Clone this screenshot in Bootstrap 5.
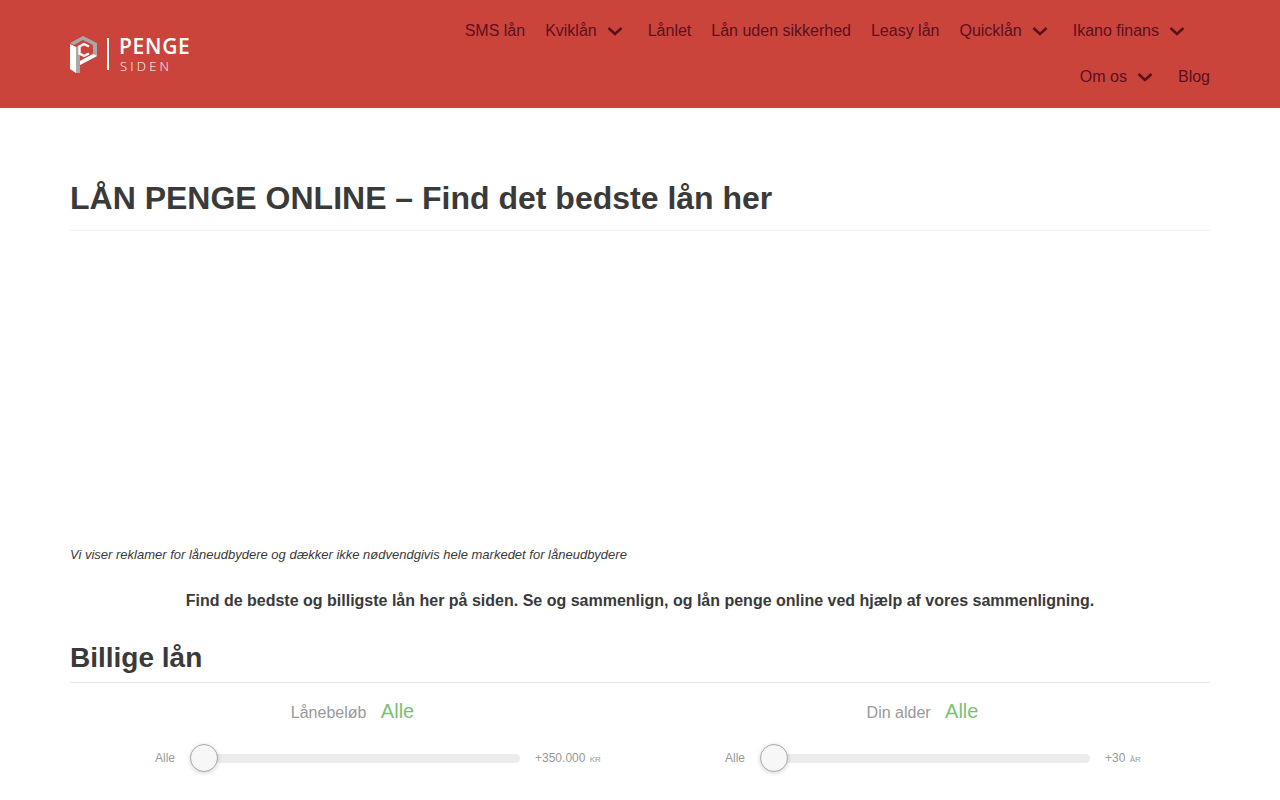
<!DOCTYPE html>
<html lang="da">
<head>
    <meta charset="UTF-8">
    <meta name="viewport" content="width=device-width, initial-scale=1.0">
    <title>Lån penge online</title>
    <link rel="stylesheet" href="https://cdn.jsdelivr.net/npm/bootstrap@5.3.0/dist/css/bootstrap.min.css">
    <style>
        body {
            font-family: "Liberation Sans", Arial, sans-serif;
            font-size: 16px;
            color: #3a3a3a;
            overflow: hidden;
        }
        .site-wrap { padding-left: 70px; padding-right: 70px; }
        .site-header { background: #cb443c; height: 108px; }
        .logo-word { font-family: "Open Sans", sans-serif; color: #fff; line-height: 1; }
        .logo-line { width: 2px; height: 32px; background: #fff; margin: 0 10px 0 10px; }
        .logo-big { font-size: 21px; font-weight: 600; letter-spacing: .7px; }
        .logo-small { font-size: 13px; font-weight: 300; letter-spacing: 3.2px; margin-top: 3px; padding-left: 1px; }
        .menu-row { height: 46px; gap: 20px; }
        .menu-row a { color: #5c0f1d; text-decoration: none; }
        .menu-caret { margin-left: 10px; margin-right: 5px; vertical-align: 0; }
        .menu-top { padding-top: 8px; }
        .menu-pad { padding-right: 20px; }
        .page-title { font-size: 32px; font-weight: 700; margin: 0; padding-top: 72px; padding-bottom: 13px; border-bottom: 1px solid #eee; line-height: 37px; }
        .ad-space { height: 316px; }
        .ad-note { font-size: 13px; font-style: italic; line-height: 15px; margin: 0; }
        .lead-line { font-weight: 700; text-align: center; margin: 0; padding-top: 27px; line-height: 24px; }
        .sub-title { font-size: 28px; font-weight: 700; margin: 0; padding-top: 29px; padding-bottom: 8px; border-bottom: 1px solid #e6e6e6; line-height: 32px; }
        .filter-head { color: #999; height: 56px; padding-top: 14px; line-height: 28px; padding-right: 5px; }
        .filter-value { color: #7dbf73; font-size: 20px; margin-left: 10px; }
        .filter-row { padding-left: 85px; font-size: 12px; color: #999; gap: 15px; height: 38px; }
        .slider-track { width: 330px; height: 9px; background: #ececec; border-radius: 5px; }
        .slider-knob { width: 28px; height: 28px; top: -10px; background: #f7f7f7; border: 1px solid #aaa; border-radius: 50%; box-shadow: 0 1px 4px rgba(0,0,0,.18); }
        .unit-text { font-size: 8px; margin-left: 1px; text-transform: uppercase; }
    </style>
</head>
<body>

    <!-- Header -->
    <header class="site-header site-wrap d-flex justify-content-between">
        <a href="#" class="d-flex align-items-center text-decoration-none">
            <svg width="27" height="37" viewBox="0 0 27 37" class="flex-shrink-0">
                <polygon points="0,7 13,0 27,7 27,20 10,29 10,25 23,18 23,9 13,4 4,9" fill="#a8a8a8"/>
                <polygon points="6,11 10,9 10,37 6,37" fill="#a8a8a8"/>
                <polygon points="0,8 6,11 6,37 0,33" fill="#fff"/>
                <path d="M19 10.500 14 8 9.500 10.500V17.500L14 20 19 17.500" fill="none" stroke="#fff" stroke-width="2.400"/>
                <polygon points="10,25 23,18 27,20 10,29" fill="#fff"/>
            </svg>
            <span class="logo-line"></span>
            <span class="logo-word d-flex flex-column">
                <span class="logo-big">PENGE</span>
                <span class="logo-small">SIDEN</span>
            </span>
        </a>
        <nav class="menu-top">
            <div class="menu-row d-flex justify-content-end align-items-center menu-pad">
                <a href="#">SMS lån</a>
                <a href="#">Kviklån<svg class="menu-caret" width="16" height="10" viewBox="0 0 16 10"><path d="M1.500 2 8 8l6.500-6" fill="none" stroke="#5c0f1d" stroke-width="2.600"/></svg></a>
                <a href="#">Lånlet</a>
                <a href="#">Lån uden sikkerhed</a>
                <a href="#">Leasy lån</a>
                <a href="#">Quicklån<svg class="menu-caret" width="16" height="10" viewBox="0 0 16 10"><path d="M1.500 2 8 8l6.500-6" fill="none" stroke="#5c0f1d" stroke-width="2.600"/></svg></a>
                <a href="#">Ikano finans<svg class="menu-caret" width="16" height="10" viewBox="0 0 16 10"><path d="M1.500 2 8 8l6.500-6" fill="none" stroke="#5c0f1d" stroke-width="2.600"/></svg></a>
            </div>
            <div class="menu-row d-flex justify-content-end align-items-center">
                <a href="#">Om os<svg class="menu-caret" width="16" height="10" viewBox="0 0 16 10"><path d="M1.500 2 8 8l6.500-6" fill="none" stroke="#5c0f1d" stroke-width="2.600"/></svg></a>
                <a href="#">Blog</a>
            </div>
        </nav>
    </header>

    <main class="site-wrap">
        <h1 class="page-title">LÅN PENGE ONLINE – Find det bedste lån her</h1>
        <div class="ad-space"></div>
        <p class="ad-note">Vi viser reklamer for låneudbydere og dækker ikke nødvendgivis hele markedet for låneudbydere</p>
        <p class="lead-line">Find de bedste og billigste lån her på siden. Se og sammenlign, og lån penge online ved hjælp af vores sammenligning.</p>
        <h2 class="sub-title">Billige lån</h2>

        <div class="row g-0">
            <div class="col-6">
                <div class="filter-head text-center">Lånebeløb <span class="filter-value">Alle</span></div>
                <div class="filter-row d-flex align-items-center">
                    <span>Alle</span>
                    <div class="slider-track position-relative"><div class="slider-knob position-absolute start-0"></div></div>
                    <span>+350.000 <span class="unit-text">kr</span></span>
                </div>
            </div>
            <div class="col-6">
                <div class="filter-head text-center">Din alder <span class="filter-value">Alle</span></div>
                <div class="filter-row d-flex align-items-center">
                    <span>Alle</span>
                    <div class="slider-track position-relative"><div class="slider-knob position-absolute start-0"></div></div>
                    <span>+30 <span class="unit-text">år</span></span>
                </div>
            </div>
        </div>
    </main>

    <script src="https://cdn.jsdelivr.net/npm/bootstrap@5.3.0/dist/js/bootstrap.bundle.min.js"></script>
</body>
</html>
